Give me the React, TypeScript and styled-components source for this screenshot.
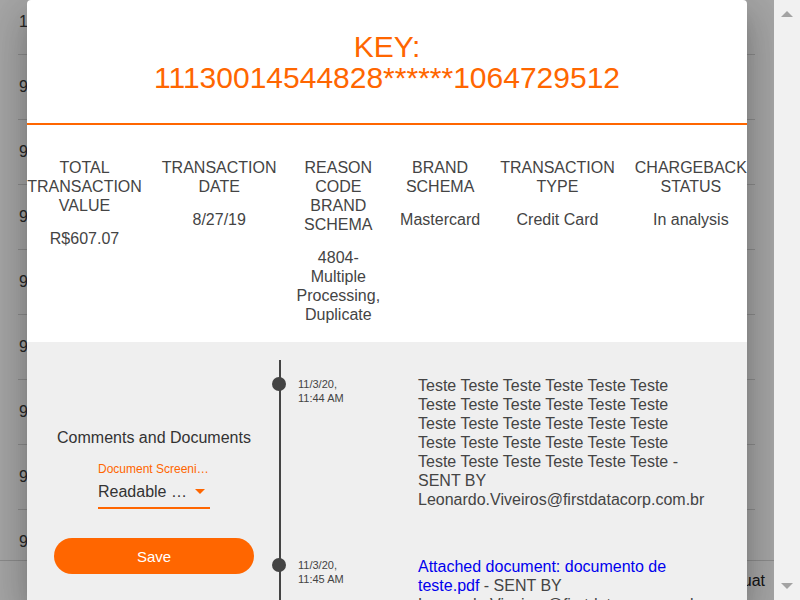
import React from 'react';
import styled, { createGlobalStyle } from 'styled-components';

const Global = createGlobalStyle`
  html, body { margin: 0; padding: 0; height: 100%; overflow: hidden; }
  body { font-family: "Liberation Sans", Arial, sans-serif; }
  #root { height: 100%; }
`;

const Page = styled.div`
  display: flex;
  width: 800px;
  height: 600px;
  overflow: hidden;
`;

const Main = styled.div`
  position: relative;
  flex: 1;
  display: flex;
  flex-direction: column;
  background: #fff;
  overflow: hidden;
`;

const TableArea = styled.div`
  flex: 1;
  overflow: hidden;
  padding: 0 19px 0 18px;
`;

const Rows = styled.div`
  margin-top: -10px;
`;

const BgRow = styled.div`
  height: 65px;
  box-sizing: border-box;
  border-bottom: 1px solid #d8d8d8;
  display: flex;
  align-items: center;
  padding: 0 0 0 1px;
  font-size: 16px;
  color: #3c3c3c;
`;

const Footer = styled.div`
  flex: none;
  height: 40px;
  box-sizing: border-box;
  border-top: 1px solid #d8d8d8;
  display: flex;
  align-items: center;
  justify-content: flex-end;
  padding-right: 9px;
  font-size: 16px;
  color: #222;
`;

const ScrollBar = styled.div`
  flex: none;
  width: 26px;
  background: #f1f1f1;
  display: flex;
  flex-direction: column;
  justify-content: space-between;
  align-items: center;
  padding: 11px 0;
  box-sizing: border-box;
`;

const Overlay = styled.div`
  position: absolute;
  inset: 0;
  background: rgba(0, 0, 0, 0.35);
  display: flex;
  justify-content: center;
`;

const Modal = styled.div`
  width: 720px;
  height: 600px;
  background: #fff;
  border-radius: 4px 4px 0 0;
  box-shadow: 0 11px 15px -7px rgba(0, 0, 0, 0.2), 0 24px 38px 3px rgba(0, 0, 0, 0.14),
    0 9px 46px 8px rgba(0, 0, 0, 0.12);
  overflow: hidden;
  display: flex;
  flex-direction: column;
`;

const Header = styled.div`
  flex: none;
  padding: 31px 0 30px;
  text-align: center;
  color: #ff6600;
  font-size: 30px;
  line-height: 31px;
  border-bottom: 2px solid #ff6600;
`;

const TitleLine = styled.div``;

const Info = styled.div`
  flex: none;
  display: flex;
  justify-content: center;
  align-items: flex-start;
  padding: 33px 0 18px;
  color: #444;
`;

const InfoCol = styled.div`
  flex: none;
  width: min-content;
  padding: 0 10px;
  text-align: center;
`;

const InfoHead = styled.div`
  font-size: 16px;
  line-height: 19px;
  margin-bottom: 14px;
`;

const InfoValue = styled.div`
  font-size: 16px;
  line-height: 19px;
`;

const Grey = styled.div`
  flex: 1;
  background: #efefef;
  display: flex;
  align-items: stretch;
`;

const LeftPanel = styled.div`
  flex: none;
  width: 252px;
  display: flex;
  flex-direction: column;
  align-items: center;
  padding: 86px 0 0 2px;
  box-sizing: border-box;
`;

const PanelTitle = styled.div`
  font-size: 16px;
  line-height: 19px;
  color: #333;
`;

const SelectField = styled.div`
  width: 112px;
  margin-top: 15px;
`;

const SelectLabel = styled.div`
  font-size: 12px;
  line-height: 14px;
  color: #ff6600;
  white-space: nowrap;
  overflow: hidden;
  text-overflow: ellipsis;
`;

const SelectBox = styled.div`
  display: flex;
  align-items: center;
  margin-top: 6px;
  padding-bottom: 6px;
  border-bottom: 2px solid #ff6600;
`;

const SelectValue = styled.div`
  flex: none;
  width: 90px;
  font-size: 16px;
  line-height: 19px;
  color: #333;
  white-space: nowrap;
  overflow: hidden;
  text-overflow: ellipsis;
`;

const Caret = styled.svg`
  margin-left: auto;
  margin-right: 5px;
`;

const SaveButton = styled.button`
  margin-top: 29px;
  width: 200px;
  height: 36px;
  border: none;
  border-radius: 18px;
  background: #ff6600;
  color: #fff;
  font-family: "Liberation Sans", Arial, sans-serif;
  font-size: 15px;
`;

const Timeline = styled.div`
  flex: none;
  margin-top: 18px;
  border-left: 2px solid #444;
  padding: 16px 0 0 17px;
`;

const Entry = styled.div`
  position: relative;
  display: grid;
  grid-template-columns: 120px 276px;
  margin-bottom: 48px;
`;

const Dot = styled.span`
  position: absolute;
  left: -26px;
  top: 1px;
  width: 14px;
  height: 14px;
  border-radius: 50%;
  background: #444;
`;

const EntryDate = styled.div`
  padding-top: 1px;
  font-size: 11px;
  line-height: 14px;
  color: #444;
`;

const Message = styled.div`
  font-size: 16px;
  line-height: 19px;
  color: #444;
`;

const DocLink = styled.a`
  color: #0000ee;
  text-decoration: none;
`;

const Arrow = styled.svg`
  display: block;
`;

const columns = [
  { head: 'TOTAL TRANSACTION VALUE', value: 'R$607.07' },
  { head: 'TRANSACTION DATE', value: '8/27/19' },
  { head: 'REASON CODE BRAND SCHEMA', value: '4804- Multiple Processing, Duplicate' },
  { head: 'BRAND SCHEMA', value: 'Mastercard' },
  { head: 'TRANSACTION TYPE', value: 'Credit Card' },
  { head: 'CHARGEBACK STATUS', value: 'In analysis' },
];

const rowValues = ['11130014544828', '90000000000', '90000000000', '90000000000', '90000000000', '90000000000', '90000000000', '90000000000', '90000000000'];

export default function App() {
  const teste = Array.from({ length: 30 }, () => 'Teste').join(' ');
  return (
    <>
      <Global />
      <Page>
        <Main>
          <TableArea>
            <Rows>
              {rowValues.map((v, i) => (
                <BgRow key={i}>{v}</BgRow>
              ))}
            </Rows>
          </TableArea>
          <Footer>Situat</Footer>
          <Overlay>
            <Modal>
              <Header>
                <TitleLine>KEY:</TitleLine>
                <TitleLine>11130014544828******1064729512</TitleLine>
              </Header>
              <Info>
                {columns.map((c) => (
                  <InfoCol key={c.head}>
                    <InfoHead>{c.head}</InfoHead>
                    <InfoValue>{c.value}</InfoValue>
                  </InfoCol>
                ))}
              </Info>
              <Grey>
                <LeftPanel>
                  <PanelTitle>Comments and Documents</PanelTitle>
                  <SelectField>
                    <SelectLabel>Document Screening</SelectLabel>
                    <SelectBox>
                      <SelectValue>Readable document</SelectValue>
                      <Caret width="10" height="5" viewBox="0 0 10 5">
                        <path d="M0 0h10L5 5z" fill="#ff6600" />
                      </Caret>
                    </SelectBox>
                  </SelectField>
                  <SaveButton>Save</SaveButton>
                </LeftPanel>
                <Timeline>
                  <Entry>
                    <Dot />
                    <EntryDate>
                      11/3/20,
                      <br />
                      11:44 AM
                    </EntryDate>
                    <Message>
                      {teste} - SENT BY Leonardo.Viveiros@firstdatacorp.com.br
                    </Message>
                  </Entry>
                  <Entry>
                    <Dot />
                    <EntryDate>
                      11/3/20,
                      <br />
                      11:45 AM
                    </EntryDate>
                    <Message>
                      <DocLink href="#">Attached document: documento de teste.pdf</DocLink> - SENT BY
                      Leonardo.Viveiros@firstdatacorp.com.br
                    </Message>
                  </Entry>
                </Timeline>
              </Grey>
            </Modal>
          </Overlay>
        </Main>
        <ScrollBar>
          <Arrow width="12" height="6" viewBox="0 0 12 6">
            <path d="M0 6L6 0l6 6z" fill="#a3a3a3" />
          </Arrow>
          <Arrow width="12" height="6" viewBox="0 0 12 6">
            <path d="M0 0h12L6 6z" fill="#a3a3a3" />
          </Arrow>
        </ScrollBar>
      </Page>
    </>
  );
}
